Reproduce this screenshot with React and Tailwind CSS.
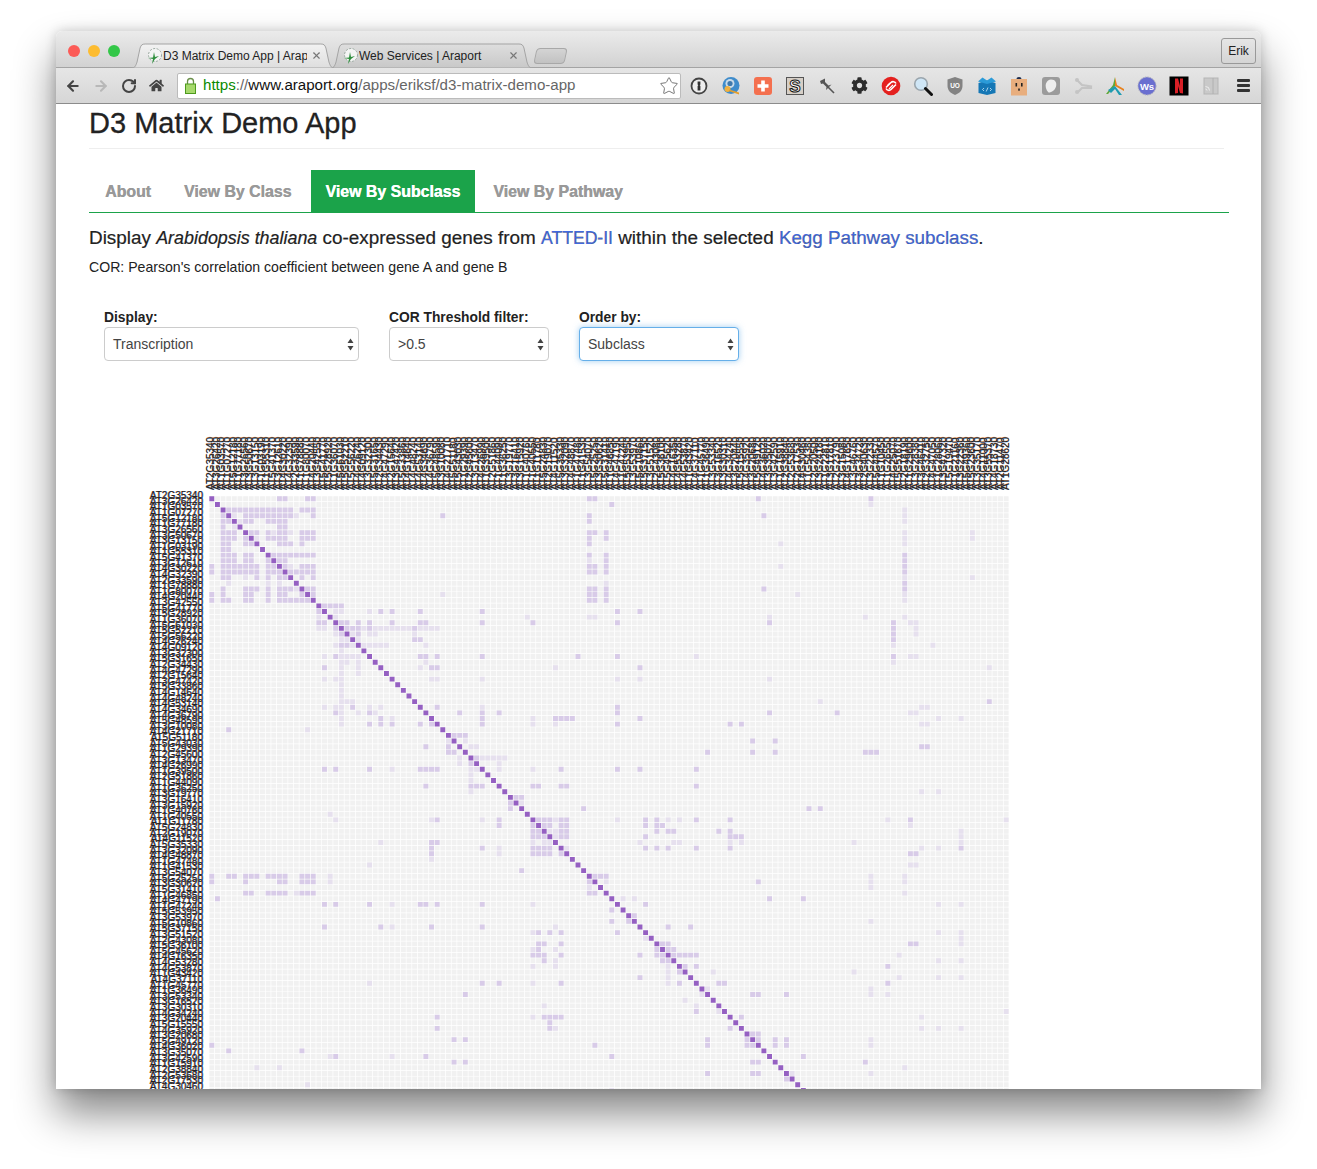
import { ArrowLeft, ArrowRight, RotateCw, Star, X } from 'lucide-react'
import { FaCog, FaHome } from 'react-icons/fa'

const PITCH = 800 / 142
const COLS = 142
const ROWS = 106

// off diagonal cells, row -> columns, "l" marks the paler ones
const CELLS = {
  0: '12 13 17 18 67 68 97 117', 1: '71 117l',
  2: '3 4 5 6 7 8 9 10 11 12 13 14 16 17 18 123l',
  3: '2 4l 6 7 8 9 10 11 12 13 14 15l 18 41 67 98 123l',
  4: '2 3 5l 6 7 10 11 12 13 67 123l', 5: '2 4l 12 13',
  6: '2 3 4 7 8 10 11l 12 13 14l 16 17 18 67 68 70 123l 135l',
  7: '2 3 4 6 8l 10 11 12 13 16 17 18 67 70 123l 135l',
  8: '2 3 6 7 12 13 14 16 67 101l 123l', 9: '2 3',
  10: '2 3 4 6 7 11 12 13 14 15 16 17 18 67 70 123',
  11: '2 3 4 6 7 10 12 13 67l 70 123',
  12: '0 2 3 4 5 6 7 8 10 11 13 14l 16 17 18 67 68 70 101l 123',
  13: '0 2 3 4 5 6 7 8 10 11 12 14 15 16 17 18 67 68 70 123',
  14: '2 3 6l 8 10 12 13 16 18 123l 135l', 15: '3l 10l 12l 70l 123',
  16: '2 6 7 8 10 12 13 14 15l 17 18 67 68 70 98 123',
  17: '0 2 6 7 10 12 13 16 18 41l 67 68 70 104l 123l',
  18: '0 2 3 6 7 10 12 13 14 15 16 17 67 68 70 123l',
  19: '20 21 22 23', 20: '19 22l 23l 28l 30 32 37 48 72 76',
  21: '19l 22l 56l 67l 68l 99l 116l 123l',
  22: '19 20 23 24 26 28 32 37 38 48 57 72 99 121 124l 125l',
  23: '19l 20l 22 24 25 26 27l 28 29l 30l 31l 32l 33l 34l 35l 36 37l 38l 39l 40l 121 125l',
  24: '22l 23 25l 26 28l 29l 36l 121 125l', 25: '23l 24l 26l 36 37 121',
  26: '22l 23 24 25l 27l 28l 29l 30l 31l 38l 121l 128l', 27: '23l',
  28: '20l 22 23l 24l 25l 26l 37 38 40 48 65 72 86l 121 124l 125l',
  29: '23l 24l 26l 38l 121l', 30: '20 23l 26l 37l 39 40 61l 76 138l', 31: '23l 26l',
  32: '20l 22l 23l 39l 40l 48l 72l 76l 99l', 33: '23l', 34: '23l', 35: '23l',
  36: '23l 24l 25l 108l 138', 37: '20l 22l 23l 25 28l 30l 40 48l 72 126l 127l',
  38: '22 23l 26l 28 29l 44 48 51 72 99 111 124l 125l',
  39: '23l 30 32l 48 57l 61 62 63 64 76 129l 133l',
  40: '23l 28 30 32 37 39 48 57l 61l 72 92 94 126l 127l', 41: '3 17l',
  42: '43 44 45', 43: '42l 45l 96 100', 44: '38 42 46l 47l 126 127',
  45: '42 43 88 96 100 116 117 118', 46: '44l 47 48l 49l 50l 51l 52l', 47: '44l 46 51l',
  48: '20 22 28 32l 37 38 39 40 46l 47l 51l 57l 62 72 76 86', 49: '46l', 50: '46l',
  51: '38 46 47 48 57 58 62 63 86', 52: '46l 126l 129l', 53: '54 55', 54: '53 55l',
  55: '53 66 106 108', 56: '21l',
  57: '22l 39l 40 48l 51 58 59 60 61l 62 63 72l 77 79 81l 83l 86 92 120l 124 141l',
  58: '51 57 59 60 62 63 77 79 80 124l', 59: '57 58 60l 61l 62 63 79 81 82 90 92 133l',
  60: '57 58 59 61l 62 63 77 92 93 94 133l',
  61: '30l 39 40 57l 59l 60l 76l 82l 83l 92l 94l 114l 133l',
  62: '39 48 51l 57 58 59 60 63l 77 79 81 86 92 126l 129l 133',
  63: '39 51l 57 58 59 60 62 124 125', 64: '39l', 65: '28l 124l 125l', 66: '55',
  67: '0 3 4 6 7 8 10 11 12 13 16 17 18 21l 68 69 70 117l 123l',
  68: '0 6 12 13 16 17 18 21l 67 70l 97 117l 123l', 69: '67l 117l',
  70: '6 7 10 11 12 13 15l 16 17 18 67 68 123l', 71: '1 73l 75l 99 105',
  72: '20 22 28 32l 37 38 40 48 57l 77 129l 133l', 73: '71', 74: '75', 75: '71 74 117l',
  76: '20 30 32l 39 48 61l 81 85', 77: '57l 58 60 62 72 129l 133l', 78: '77l 133l',
  79: '58 59 62 80 81 124 125 133l', 80: '57l 58 61l 79 81 82',
  81: '57 58 59 62 76 79 80 82 83 84 85 86 122l', 82: '59 61l 80 81 129l 133l',
  83: '57l 61l 81l 84 86 120', 84: '81l 83 89l 114l', 85: '76 81l 122l 129l 133l',
  86: '28l 48 51 57l 62 81l 83 90 91 120', 87: '88l 117l', 88: '45 87l 96 97 102 117l 120l',
  89: '84l', 90: '59l 86l', 91: '86 90l 141l', 92: '40 57l 59 60 61 62 94 126l', 93: '60',
  94: '40 60 61l 92 126l 129l 133l', 95: '96 97', 96: '43 45 88 95 97 100 102 117l',
  97: '0 68 88 95 96 100 102 117l', 98: '3 16', 99: '21l 22 32l 38 71 105',
  100: '43 45 96 97 116', 101: '8l 12l 123l', 102: '88 96 97 103l 117l', 103: '102', 104: '17l',
  105: '71l',
}

const square = (r, c) => `M${(c * PITCH + 0.35).toFixed(2)} ${(r * PITCH + 0.35).toFixed(2)}h4.9v4.9h-4.9z`

function buildPaths() {
  let base = ''
  let mid = ''
  let pale = ''
  let diag = ''
  for (let r = 0; r < ROWS; r++) {
    for (let c = 0; c < COLS; c++) base += square(r, c)
    diag += square(r, r)
    for (const item of (CELLS[r] || '').split(' ').filter(Boolean)) {
      if (item.endsWith('l')) pale += square(r, parseInt(item))
      else mid += square(r, parseInt(item))
    }
  }
  return { base, mid, pale, diag }
}

const PATHS = buildPaths()

const FIRST_GENES = [
  'AT2G35340', 'AT3G26420', 'AT1G03570', 'AT1G07270', 'AT5G12180', 'AT1G77180', 'AT3G26560',
  'AT3G50670', 'AT3G13150', 'AT1G03190', 'AT1G55310', 'AT5G41370', 'AT3G12610', 'AT4G30220',
  'AT4G32390', 'AT2G33590', 'AT1G78880', 'AT1G80070', 'AT4G20440', 'AT3G42550', 'AT5G41770',
  'AT5G28920', 'AT1G36070', 'AT5G61030', 'AT5G52210', 'AT5G56220', 'AT4G26240', 'AT4G09120',
]

// the rest of the ids cannot be read in the picture, any stable list will do
const GENES = FIRST_GENES.slice()
for (let i = GENES.length, seed = 71; i < COLS; i++) {
  seed = (seed * 137 + 29) % 6569
  GENES.push(`AT${(seed % 5) + 1}G${String(10000 + (seed * 7) % 70000).slice(0, 4).padStart(4, '0')}0`)
}

function TabShape({ active }) {
  return (
    <svg className="absolute inset-0 w-full h-full" viewBox="0 0 200 25" preserveAspectRatio="none">
      <defs>
        <linearGradient id={active ? 'tabOn' : 'tabOff'} x1="0" y1="0" x2="0" y2="1">
          <stop offset="0" stopColor={active ? '#f2f2f2' : '#dedede'} />
          <stop offset="1" stopColor={active ? '#dedede' : '#c8c8c8'} />
        </linearGradient>
      </defs>
      <path
        d="M0 25C3 25 4 22 5 19L8 5C9 2 10 1 13 1H187C190 1 191 2 192 5L195 19C196 22 197 25 200 25Z"
        fill={`url(#${active ? 'tabOn' : 'tabOff'})`}
        stroke="#a4a4a4"
        vectorEffect="non-scaling-stroke"
      />
    </svg>
  )
}

function Favicon() {
  return (
    <svg width="18" height="18" viewBox="0 0 18 18" className="shrink-0">
      <circle cx="10" cy="8" r="6.5" fill="#f4f4f4" stroke="#9aa9a0" strokeDasharray="2 1.5" />
      <path d="M7 17L8 12L3 11L8 10.5L9 5L10 10L14 9L10 12Z" fill="#2f8f3e" />
    </svg>
  )
}

function BrowserTab({ title, active, width, iconLeft, closeGap }) {
  return (
    <div className={`relative h-[25px] -mr-[3px] ${active ? 'z-10' : ''}`} style={{ width }}>
      <TabShape active={active} />
      <div className="relative flex items-center h-full text-[12px] text-[#222]" style={{ paddingLeft: iconLeft }}>
        <Favicon />
        <span className="overflow-hidden whitespace-nowrap" style={{ width: closeGap }}>{title}</span>
        <X size={11} strokeWidth={2.5} className="text-[#777] ml-[4px]" />
      </div>
    </div>
  )
}

function Ext({ children }) {
  return (
    <div className="w-[32px] flex justify-center">
      <svg width="20" height="20" viewBox="0 0 20 20" fontFamily="Liberation Sans, Arial, sans-serif">{children}</svg>
    </div>
  )
}

function ExtIcons() {
  return (
    <div className="flex items-center ml-[3px] -translate-x-px">
      <Ext>
        <circle cx="10" cy="10" r="7.5" fill="#eee" stroke="#444" strokeWidth="1.8" />
        <path d="M8.6 5.5h2.8v3l-.7.8.7.8v4.4H8.6v-4.4l.7-.8-.7-.8z" fill="#333" />
      </Ext>
      <Ext>
        <circle cx="10" cy="9.5" r="8.5" fill="#3f8ccb" />
        <circle cx="9" cy="7.5" r="4.5" fill="#c9dbe9" />
        <circle cx="9" cy="7.5" r="2.6" fill="#3f79ad" />
        <circle cx="6.5" cy="13" r="3" fill="#f1b13f" />
        <path d="M8 13.5L18 16.5V18.5L8 15Z" fill="#e8a02c" />
      </Ext>
      <Ext>
        <rect x="1" y="1" width="18" height="18" rx="3" fill="#f4704f" />
        <path d="M8.2 4.5h3.6v3.7h3.7v3.6h-3.7v3.7H8.2v-3.7H4.5V8.2h3.7z" fill="#fff" />
      </Ext>
      <Ext>
        <rect x="1.5" y="1.5" width="17" height="17" fill="#d6cfc7" stroke="#555" />
        <text x="10" y="16" textAnchor="middle" fontSize="17" fontWeight="700" fill="#fff" stroke="#111" strokeWidth="1">S</text>
      </Ext>
      <Ext>
        <path d="M3 5L8 2.5L8 6L11.5 9.5L14.5 8.5L9 14L9.5 11L6 7.5L4 8Z" fill="#555" />
        <path d="M11 11L17 17" stroke="#555" strokeWidth="1.6" />
      </Ext>
      <div className="w-[32px] flex justify-center">
        <FaCog size={17} color="#2c2c2c" />
      </div>
      <Ext>
        <circle cx="10" cy="10" r="9.3" fill="#e4211f" />
        <path d="M5 11.5L10 6.5C11.5 5 14 5.5 15 7.5M15 8.5L10 13.5C8.5 15 6 14.5 5 12.5" fill="none" stroke="#fff" strokeWidth="1.6" />
        <path d="M8 13L12 9M6.5 9.5L9 7" fill="none" stroke="#fff" strokeWidth="1.1" />
      </Ext>
      <Ext>
        <circle cx="8" cy="8" r="6.3" fill="#cfe6f6" stroke="#9aa5ad" strokeWidth="1.6" />
        <path d="M12.5 12.5L18.5 18.5" stroke="#111" strokeWidth="3" strokeLinecap="round" />
      </Ext>
      <Ext>
        <path d="M10 1L17.5 3.5V10C17.5 14.5 14 17.5 10 19C6 17.5 2.5 14.5 2.5 10V3.5Z" fill="#838383" />
        <text x="10" y="12" textAnchor="middle" fontSize="6.5" fontWeight="700" fill="#fff">UO</text>
      </Ext>
      <Ext>
        <path d="M1.5 7L10 4.5L18.5 7V17L10 19L1.5 17Z" fill="#1577b5" />
        <path d="M1 5.5L5.5 1.5L10 4.5L14.5 1.5L19 5.5L10 8Z" fill="#2b9bd8" />
        <path d="M7 12l-1.5 1.5L7 15M13 12l1.5 1.5L13 15M11 11.5L9.2 15.5" stroke="#cfeaf8" strokeWidth=".8" fill="none" />
      </Ext>
      <Ext>
        <rect x="2" y="3" width="16" height="16.5" fill="#e8ae7e" />
        <path d="M7.5 3a2.5 2 0 0 1 5 0z" fill="#1c2b4d" />
        <rect x="6.5" y="7" width="1.6" height="3.5" fill="#222" />
        <rect x="12" y="7" width="1.6" height="3.5" fill="#222" />
        <rect x="9.2" y="12.5" width="1.6" height="2.2" fill="#222" />
      </Ext>
      <Ext>
        <rect x="1" y="1" width="18" height="18" rx="3" fill="#9b9b9b" />
        <path d="M10 3.5C14.5 3.5 16 7 15 10.5C14 14 11 16.5 7.5 16.5C5 14 4 10 5 7.5C6 5 8 3.5 10 3.5Z" fill="#eeeeee" />
      </Ext>
      <Ext>
        <path d="M3 3L9 9L18 10.5V12L9 12L4 17" fill="none" stroke="#c4c4c4" strokeWidth="2.2" />
        <circle cx="4" cy="4" r="2" fill="#c4c4c4" />
        <circle cx="4" cy="16" r="2" fill="#c4c4c4" />
      </Ext>
      <Ext>
        <path d="M10 1V10L3 18H1L8 9Z" fill="#5fa83a" />
        <path d="M10 1L12 9L19 13V15L10 10Z" fill="#e8821e" />
        <path d="M3 14L10 10L17 19H14L10 13L6 17Z" fill="#1f9bb0" />
      </Ext>
      <Ext>
        <circle cx="10" cy="10" r="9" fill="#6a6fd0" stroke="#aab" strokeDasharray="1.5 1" />
        <text x="10" y="13.5" textAnchor="middle" fontSize="9.5" fontWeight="700" fill="#fff">Ws</text>
      </Ext>
      <Ext>
        <rect x="0.5" y="0.5" width="19" height="19" fill="#000" />
        <path d="M6 2.5h3L11 10V2.5h3v15l-3-.5L9 10v7l-3 .5z" fill="#d81f26" />
      </Ext>
      <Ext>
        <rect x="3" y="2" width="14" height="16" fill="#c9c9c9" stroke="#b5b5b5" />
        <path d="M12 2V18" stroke="#b0b0b0" />
        <path d="M4.5 10.5a4 4 0 0 1 4 4M4.5 13a1.5 1.5 0 0 1 1.5 1.5" fill="none" stroke="#eee" />
      </Ext>
      <div className="w-[32px] flex flex-col items-center gap-[2px]">
        <div className="w-[13px] h-[3px] rounded-[1px] bg-[#333]" />
        <div className="w-[13px] h-[3px] rounded-[1px] bg-[#333]" />
        <div className="w-[13px] h-[3px] rounded-[1px] bg-[#333]" />
      </div>
    </div>
  )
}

function BrowserChrome() {
  return (
    <div className="shrink-0">
      {/* title bar with the tabs */}
      <div className="h-[37px] flex items-end bg-gradient-to-b from-[#ebebeb] to-[#d2d2d2] border-b border-[#a4a4a4] rounded-t-[6px] relative">
        <div className="flex gap-[8px] self-start mt-[14px] ml-[12px] w-[64px]">
          <span className="w-[12px] h-[12px] rounded-full bg-[#fc5b57]" />
          <span className="w-[12px] h-[12px] rounded-full bg-[#fdbc30]" />
          <span className="w-[12px] h-[12px] rounded-full bg-[#33c748]" />
        </div>
        <div className="flex items-end -mb-[1px]">
          <BrowserTab title="D3 Matrix Demo App | Araport" active width={202} iconLeft={13} closeGap={144} />
          <BrowserTab title="Web Services | Araport" width={201} iconLeft={10} closeGap={145} />
          <div className="w-[31px] h-[16px] ml-[6px] mb-[4px] rounded-[4px] -skew-x-12 bg-gradient-to-b from-[#d4d4d4] to-[#c2c2c2] border border-[#a8a8a8]" />
        </div>
        <div className="ml-auto mr-[5px] self-start mt-[7px] w-[35px] h-[26px] rounded-[3px] border border-[#999] flex items-center justify-center text-[12px] text-[#222]">
          Erik
        </div>
      </div>

      {/* toolbar */}
      <div className="h-[36px] flex items-center bg-gradient-to-b from-[#e6e6e6] to-[#d6d6d6] border-b border-[#8c8c8c]">
        <div className="w-[121px] flex items-center pl-[9px] gap-[12px]">
          <ArrowLeft size={16} strokeWidth={3.2} className="text-[#444]" />
          <ArrowRight size={16} strokeWidth={3.2} className="text-[#b8b8b8]" />
          <RotateCw size={16} strokeWidth={3} className="text-[#444]" />
          <FaHome size={15} color="#444" />
        </div>
        <div className="w-[504px] h-[26px] flex items-center bg-white border border-[#bbb] rounded-[2px] pl-[7px] pr-[1px] text-[15.1px]">
          <svg width="11" height="17" viewBox="0 0 11 17" className="shrink-0">
            <path d="M2.5 7V4.5a3 3 0 0 1 6 0V7" fill="none" stroke="#6a8f4a" strokeWidth="1.3" />
            <rect x="0.5" y="7" width="10" height="9.5" fill="#a6d96c" stroke="#4d9a1d" />
          </svg>
          <span className="ml-[7px] whitespace-nowrap text-[#666]">
            <span className="text-[#0a8a00]">https</span>://<span className="text-[#111]">www.araport.org</span>/apps/eriksf/d3-matrix-demo-app
          </span>
          <Star size={20} strokeWidth={1.2} className="ml-auto text-[#777]" />
        </div>
        <ExtIcons />
      </div>
    </div>
  )
}

function SelectBox({ label, value, width, focus }) {
  return (
    <div style={{ width }}>
      <div className="h-[20px] text-[13.8px] font-bold text-[#222] leading-[22px] whitespace-nowrap">{label}</div>
      <div
        className={`h-[34px] flex items-center justify-between pl-[8px] pr-[4px] rounded-[4px] bg-white border text-[14px] text-[#444] ${
          focus ? 'border-[#66afe9] shadow-[0_0_6px_rgba(102,175,233,0.6)]' : 'border-[#ccc]'
        }`}
      >
        <span>{value}</span>
        <svg width="7" height="13" viewBox="0 0 7 13">
          <path d="M3.5 0.5L6.5 5H0.5Z M3.5 12.5L0.5 8H6.5Z" fill="#444" />
        </svg>
      </div>
    </div>
  )
}

function GeneLabels() {
  return GENES.map((gene, i) => (
    <div
      key={i}
      className="w-[5.65px] h-[53px] leading-[5.65px] text-[10px] text-[#222] whitespace-nowrap [writing-mode:vertical-rl] rotate-180 [text-shadow:0.5px_0_rgba(240,106,0,0.55),-0.5px_0_rgba(0,112,224,0.55)]"
    >
      {gene}
    </div>
  ))
}

function Matrix() {
  return (
    <div className="flex mt-[76px]">
      {/* row labels */}
      <div className="w-[114px] pt-[56.2px] shrink-0">
        {GENES.slice(0, ROWS).map((gene, i) => (
          <div
            key={i}
            className="h-[5.634px] leading-[5.634px] text-[10px] text-[#222] text-right whitespace-nowrap [text-shadow:-0.5px_0_rgba(240,106,0,0.55),0.5px_0_rgba(0,112,224,0.7)]"
          >
            {gene}
          </div>
        ))}
      </div>
      <div className="ml-[6px]">
        <div className="flex -ml-[1px] mb-[6px]">
          <GeneLabels />
        </div>
        <svg width="800" height={ROWS * PITCH} viewBox={`0 0 800 ${ROWS * PITCH}`} className="block">
          <path d={PATHS.base} fill="#f1f1f1" />
          <path d={PATHS.pale} fill="#e6e0ee" />
          <path d={PATHS.mid} fill="#d8cbe8" />
          <path d={PATHS.diag} fill="#9560c2" />
        </svg>
      </div>
    </div>
  )
}

export default function App() {
  return (
    <div className="w-[1317px] h-[1169px] overflow-hidden bg-white pt-[31px] pl-[56px] [font-family:'Liberation_Sans',Arial,sans-serif]">
      <div className="w-[1205px] h-[1058px] flex flex-col rounded-t-[6px] bg-white shadow-[0_24px_42px_rgba(0,0,0,0.48),0_0_12px_rgba(0,0,0,0.18)]">
        <BrowserChrome />
        <div className="flex-1 overflow-hidden pl-[33px] pr-[32px]">
          <div className="h-[45px] border-b border-[#eee] mr-[5px]">
            <h1 className="text-[29px] leading-[38px] text-[#222] [-webkit-text-stroke:0.3px_#222]">D3 Matrix Demo App</h1>
          </div>

          {/* tabs */}
          <div className="flex mt-[21px] h-[43px] border-b border-[#1ba34a] text-[15.9px] font-bold text-[#999] [text-shadow:0.4px_0_currentColor]">
            <div className="pl-[16px] pr-[16px] pt-[1px] flex items-center">About</div>
            <div className="ml-[1px] px-[16px] pt-[1px] flex items-center">View By Class</div>
            <div className="ml-[4px] pl-[14px] pr-[15px] pt-[1px] flex items-center bg-[#1ba34a] text-white">View By Subclass</div>
            <div className="ml-[4px] px-[14px] pt-[1px] flex items-center">View By Pathway</div>
          </div>

          <p className="mt-[15px] text-[18.9px] leading-[20px] text-[#222] [-webkit-text-stroke:0.2px_#222] whitespace-nowrap">
            Display <i className="text-[17.9px]">Arabidopsis thaliana</i> co-expressed genes from{' '}
            <span className="text-[#4169e1] text-[17.6px]">ATTED-II</span> within the selected{' '}
            <span className="text-[#4169e1] text-[18.8px]">Kegg Pathway subclass</span>.
          </p>
          <p className="mt-[10px] text-[14.1px] leading-[18px] text-[#222]">COR: Pearson's correlation coefficient between gene A and gene B</p>

          <div className="flex gap-[30px] mt-[31px] pl-[15px]">
            <SelectBox label="Display:" value="Transcription" width={255} />
            <SelectBox label="COR Threshold filter:" value=">0.5" width={160} />
            <SelectBox label="Order by:" value="Subclass" width={160} focus />
          </div>

          <Matrix />
        </div>
      </div>
    </div>
  )
}
